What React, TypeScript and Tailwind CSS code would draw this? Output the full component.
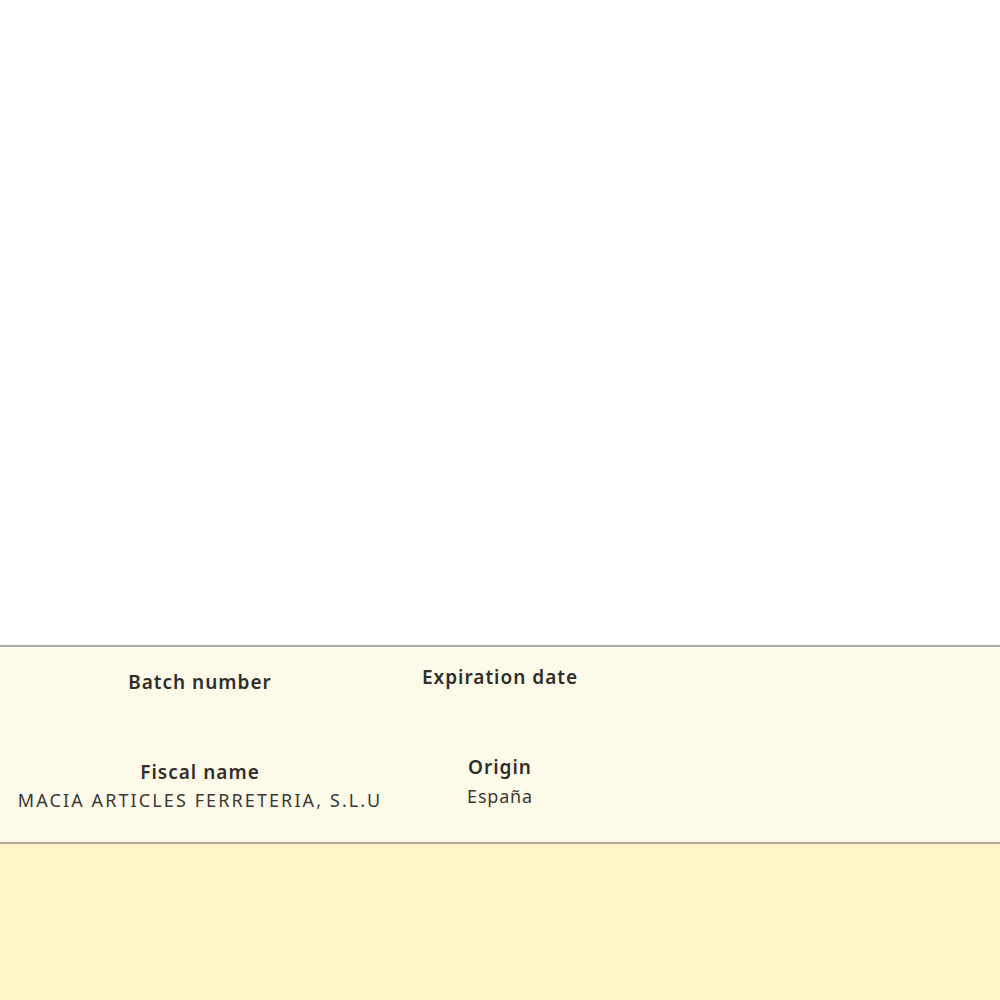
import React from "react";

function Field({
  label,
  value,
  top,
  valueTrack = "tracking-[1px]",
}: {
  label: string;
  value?: string;
  top: string;
  valueTrack?: string;
}) {
  return (
    <div className={`flex h-[90px] flex-col items-center ${top}`}>
      <div className="text-[19px] font-semibold leading-6 tracking-[1px] text-[#2f2e2a]">{label}</div>
      {value ? (
        <div className={`mt-1 text-[18px] leading-6 text-[#3a3935] ${valueTrack}`}>{value}</div>
      ) : null}
    </div>
  );
}

export default function App() {
  return (
    <div
      className="flex h-[1000px] w-full flex-col bg-white"
      style={{ fontFamily: "'Noto Sans', 'Open Sans', sans-serif" }}
    >
      <div className="h-[645px] shrink-0 bg-white" />
      <div className="h-[199px] shrink-0 border-y-2 border-t-[#a8a8a8] border-b-[#b0a898] bg-[#fefae9]">
        <div className="grid grid-cols-[400px_200px]">
          <Field label="Batch number" top="pt-[23px]" />
          <Field label="Expiration date" top="pt-[18px]" />
          <Field
            label="Fiscal name"
            value="MACIA ARTICLES FERRETERIA, S.L.U"
            top="pt-[23px]"
            valueTrack="tracking-[2.1px]"
          />
          <Field label="Origin" value="España" top="pt-[18px]" valueTrack="tracking-[0.8px] mt-[5px]" />
        </div>
      </div>
      <div className="flex-1 bg-[#fff5c4]" />
    </div>
  );
}
